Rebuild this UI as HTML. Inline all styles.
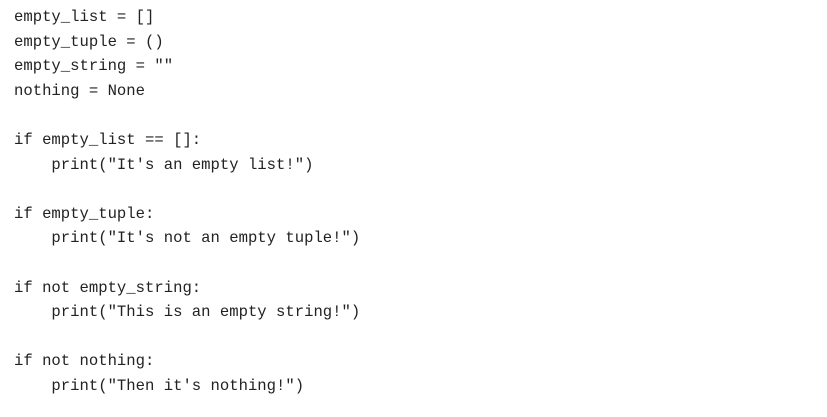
<!DOCTYPE html>
<html><head><style>
html,body{margin:0;padding:0;background:#fff;width:827px;height:417px;overflow:hidden}
pre{margin:0;padding:5px 0 0 14px;font-family:"Liberation Mono",monospace;font-size:15.6px;line-height:24.6px;color:#222}
</style></head><body>
<pre>empty_list = []
empty_tuple = ()
empty_string = ""
nothing = None

if empty_list == []:
    print("It's an empty list!")

if empty_tuple:
    print("It's not an empty tuple!")

if not empty_string:
    print("This is an empty string!")

if not nothing:
    print("Then it's nothing!")</pre>
</body></html>
